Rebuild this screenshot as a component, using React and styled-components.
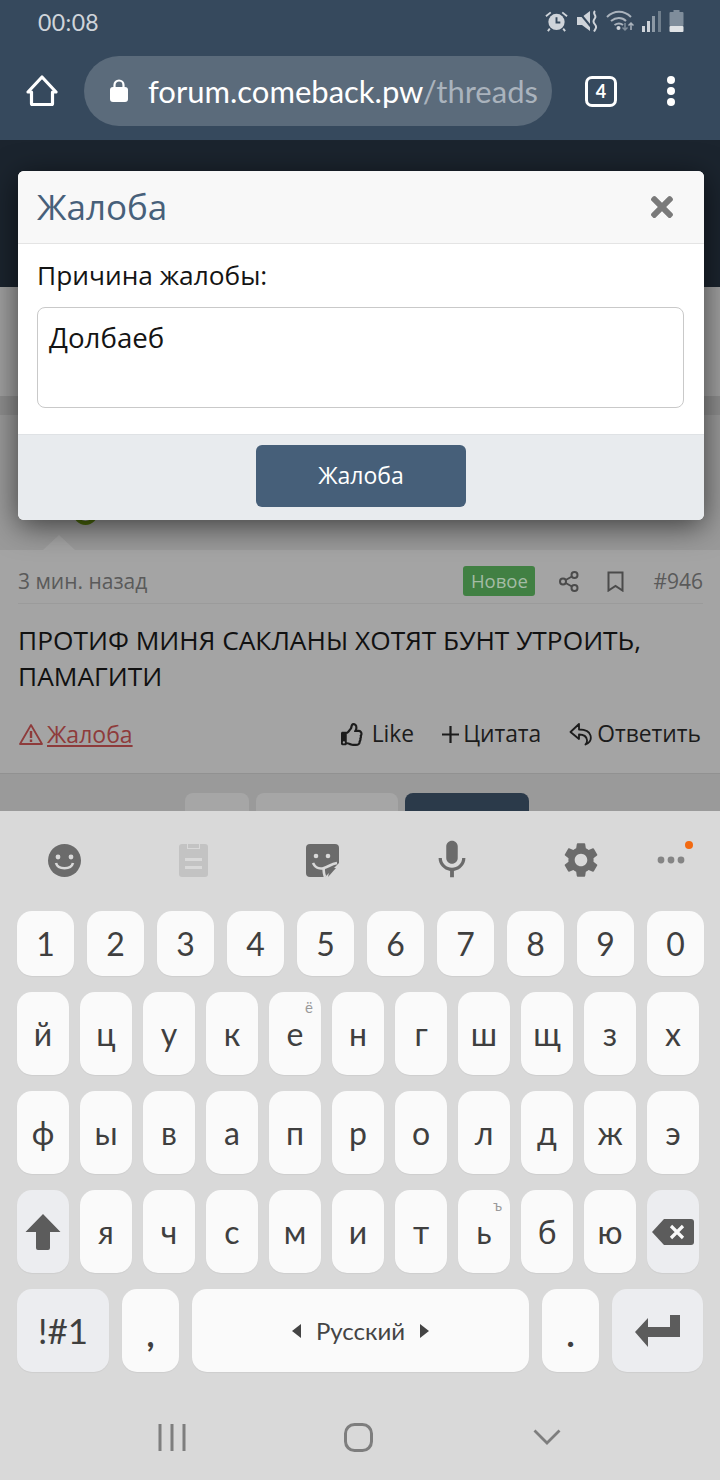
import styled, { createGlobalStyle } from "styled-components";
import { FaRegThumbsUp, FaTimes } from "react-icons/fa";
import { MdMic, MdSettings } from "react-icons/md";

const GlobalStyle = createGlobalStyle`
  html, body { margin: 0; padding: 0; background: #d9d9d9; }
  * { box-sizing: border-box; }
`;

const hand = `"Lato", "Noto Sans", sans-serif`;
const forum = `"Open Sans", "Noto Sans", sans-serif`;

const Phone = styled.div`
  width: 720px;
  height: 1480px;
  display: flex;
  flex-direction: column;
  overflow: hidden;
`;

/* browser chrome */
const Chrome = styled.header`
  height: 140px;
  background: #36495d;
  display: flex;
  flex-direction: column;
`;
const StatusBar = styled.div`
  height: 56px;
  display: flex;
  justify-content: space-between;
  align-items: flex-start;
  padding: 10px 36px 0 38px;
`;
const Clock = styled.span`
  font: 400 23px/24px ${hand};
  color: #cfd4da;
  letter-spacing: 0.4px;
`;
const StatusIcons = styled.div`
  display: flex;
  gap: 8px;
  align-items: center;
`;
const AddressRow = styled.div`
  height: 70px;
  display: flex;
  align-items: center;
  padding-left: 26px;
`;
const Pill = styled.div`
  width: 468px;
  height: 70px;
  margin-left: 26px;
  border-radius: 35px;
  background: #5b6b7b;
  display: flex;
  align-items: center;
  padding: 0 14px 0 26px;
  gap: 20px;
  overflow: hidden;
  svg { flex: none; }
`;
const Url = styled.span`
  font: 400 31px/70px ${hand};
  color: #fff;
  white-space: nowrap;
  span { color: #aab3bd; }
`;
const TabCount = styled.div`
  width: 32px;
  height: 31px;
  margin-left: 33px;
  border: 3.5px solid #fff;
  border-radius: 7px;
  color: #fff;
  font: 700 18px/24px ${hand};
  text-align: center;
`;
const MenuDots = styled.div`
  margin-left: 50px;
  display: flex;
  flex-direction: column;
  gap: 3px;
  i {
    display: block;
    width: 8px;
    height: 8px;
    border-radius: 50%;
    background: #fff;
  }
`;

/* dimmed forum page */
const Page = styled.main`
  position: relative;
  height: 671px;
  overflow: hidden;
  background: #9e9e9e;
  display: flex;
  flex-direction: column;
`;
const Band = styled.div`
  height: ${(p) => p.$h}px;
  background: ${(p) => p.$bg};
  flex: none;
`;
const AvatarBand = styled.div`
  height: 135px;
  flex: none;
  background: #9a9a9a;
  display: flex;
  align-items: flex-end;
  padding: 0 0 25px 73px;
`;
const AvatarRing = styled.div`
  width: 25px;
  height: 25px;
  border-radius: 50%;
  border: 4px solid #4c6a0c;
`;
const Post = styled.article`
  position: relative;
  height: 224px;
  flex: none;
  background: #a4a4a4;
  border-bottom: 1px solid #919191;
  padding: 16px 17px 0 18px;
  &::before {
    content: "";
    position: absolute;
    left: 43px;
    top: -15px;
    border-left: 16px solid transparent;
    border-right: 16px solid transparent;
    border-bottom: 15px solid #a4a4a4;
  }
`;
const PostMeta = styled.div`
  height: 38px;
  display: flex;
  align-items: center;
  border-bottom: 1px solid #9b9b9b;
  padding-bottom: 7px;
`;
const Ago = styled.span`
  font: 400 21px/30px ${forum};
  color: #5a5a5a;
  margin-right: auto;
`;
const NewBadge = styled.span`
  width: 72px;
  height: 30px;
  border-radius: 3px;
  background: #418043;
  color: #a4bca5;
  font: 400 18.5px/30px ${forum};
  text-align: center;
`;
const MetaIcon = styled.span`
  display: flex;
  margin-left: ${(p) => p.$ml}px;
`;
const PostNo = styled.span`
  margin-left: 29px;
  font: 400 21px/30px ${forum};
  color: #5a5a5a;
`;
const PostBody = styled.p`
  margin: 18px 0 0;
  font: 400 26.3px/36px ${forum};
  color: #111;
  height: 72px;
`;
const PostActions = styled.div`
  margin-top: 24px;
  display: flex;
  align-items: center;
  padding: 0 2px 0 1px;
`;
const ReportLink = styled.a`
  display: flex;
  align-items: center;
  margin-left: 4px;
  color: #8e3b3b;
  font: 400 23px/32px ${forum};
  margin-right: auto;
  text-decoration: underline;
`;
const Action = styled.a`
  display: flex;
  align-items: center;
  gap: ${(p) => p.$gap}px;
  margin-left: ${(p) => p.$ml}px;
  color: #1c1c1c;
  font: 400 22.8px/32px ${forum};
`;
const PagerBand = styled.nav`
  flex: none;
  height: 37px;
  background: #9a9a9a;
  display: flex;
  gap: 7px;
  padding: 19px 0 0 185px;
`;
const PagerButton = styled.span`
  width: ${(p) => p.$w}px;
  height: 40px;
  border-radius: 8px 8px 0 0;
  background: ${(p) => (p.$active ? "#2b3a4a" : "#a6a6a6")};
`;

/* report dialog */
const Modal = styled.section`
  position: absolute;
  left: 18px;
  top: 31px;
  width: 686px;
  height: 349px;
  border-radius: 6px;
  overflow: hidden;
  background: #fff;
  box-shadow: 0 6px 30px rgba(0, 0, 0, 0.6);
  display: flex;
  flex-direction: column;
`;
const ModalHead = styled.div`
  height: 73px;
  flex: none;
  background: #f8f8f8;
  border-bottom: 1px solid #e4e4e4;
  display: flex;
  justify-content: space-between;
  align-items: center;
  padding: 0 26px 0 19px;
`;
const ModalTitle = styled.h2`
  margin: 0;
  font: 400 35px/44px ${forum};
  color: #47607a;
`;
const ModalBody = styled.div`
  height: 190px;
  flex: none;
  padding: 13px 20px 0 19px;
`;
const FieldLabel = styled.label`
  display: block;
  font: 400 26.3px/36px ${forum};
  color: #141414;
`;
const TextBox = styled.div`
  margin-top: 14px;
  height: 101px;
  border: 1px solid #c9c9c9;
  border-radius: 8px;
  padding: 10px 11px;
  font: 400 27.7px/38px ${forum};
  color: #141414;
`;
const ModalFoot = styled.div`
  flex: 1;
  background: #e8ebee;
  border-top: 1px solid #dfe2e5;
  display: flex;
  justify-content: center;
  padding-top: 10px;
`;
const SubmitButton = styled.button`
  width: 210px;
  height: 62px;
  border: 0;
  border-radius: 6px;
  padding: 0 0 2px;
  background: #465f79;
  color: #fff;
  font: 400 23px/60px ${forum};
`;

/* keyboard */
const Keyboard = styled.section`
  flex: 1;
  background: #d9d9d9;
  display: flex;
  flex-direction: column;
`;
const Toolbar = styled.div`
  height: 100px;
  padding-bottom: 2px;
  display: grid;
  grid-template-columns: repeat(5, 129px) 52px;
  align-items: center;
  justify-items: center;
`;
const ToolCell = styled.span`
  position: relative;
  display: flex;
`;
const Badge = styled.i`
  position: absolute;
  right: -8px;
  top: -15px;
  width: 8px;
  height: 8px;
  border-radius: 50%;
  background: #f26a12;
`;
const Keys = styled.div`
  display: flex;
  flex-direction: column;
  gap: 16px;
  padding-left: 17px;
`;
const KeyRow = styled.div`
  display: flex;
  gap: ${(p) => p.$gap}px;
`;
const Key = styled.div`
  position: relative;
  width: ${(p) => p.$w}px;
  height: ${(p) => p.$h}px;
  border-radius: 15px;
  background: ${(p) => (p.$fn ? "#ecedf0" : "#fafafa")};
  box-shadow: 0 1px 1px rgba(0, 0, 0, 0.05);
  display: flex;
  align-items: ${(p) => (p.$low ? "flex-end" : "center")};
  justify-content: center;
  gap: 15px;
  padding-bottom: ${(p) => (p.$low ? 11 : 0)}px;
  color: #3f3f3f;
  font: ${(p) => (p.$low ? 900 : 400)} ${(p) => p.$size || 32}px/${(p) => (p.$low ? "52px" : "1")} ${hand};
`;
const KeyHint = styled.span`
  position: absolute;
  top: 6px;
  right: 8px;
  font: 400 15px/18px ${hand};
  color: #9a9a9a;
`;
const SpaceLabel = styled.span`
  font: 400 24px/1 ${hand};
  color: #444;
`;
const NavBar = styled.div`
  flex: 1;
  display: flex;
  align-items: center;
  padding-top: 22px;
`;
const NavCell = styled.span`
  width: ${(p) => p.$w}px;
  display: flex;
  justify-content: center;
  flex: none;
`;

const icon = "#6b6b6b";

function AlarmIcon() {
  return (
    <svg width="23" height="22" viewBox="0 0 24 22">
      <circle cx="12" cy="12" r="8.5" fill="#cfd4da" />
      <path d="M12 7v5.500h4" stroke="#36495d" strokeWidth="2" fill="none" />
      <path d="M1 6l5-4M23 6l-5-4M5 19l-2 2.500M19 19l2 2.500" stroke="#cfd4da" strokeWidth="2" />
    </svg>
  );
}

function MuteIcon() {
  return (
    <svg width="22" height="22" viewBox="0 0 22 22">
      <path d="M1 7h5l8 -6v20l-8-6H1z" fill="#cfd4da" />
      <path d="M2 1l14 17" stroke="#36495d" strokeWidth="2" />
      <path d="M19 1c-3 3 2 4 0 7s-2 4 0 6.500s1 4-1 7" stroke="#cfd4da" strokeWidth="2" fill="none" />
    </svg>
  );
}

function WifiIcon() {
  return (
    <svg width="28" height="22" viewBox="0 0 28 22">
      <path d="M1 7c7-7 17-7 24 0M5 11c5-4 11-4 15 0M8.500 15c3-2 6-2 8.500 0" stroke="#aab3bd" strokeWidth="2" fill="none" />
      <circle cx="12.500" cy="18" r="2" fill="#cfd4da" />
      <path d="M19 13v7m-2.500-2.500l2.500 2.500l2.500-2.500" stroke="#7f8d9b" strokeWidth="1.500" fill="none" />
      <path d="M25 20v-7m-2.500 2.500l2.500-2.500l2.500 2.500" stroke="#aab3bd" strokeWidth="1.500" fill="none" />
    </svg>
  );
}

function SignalIcon() {
  return (
    <svg width="19" height="22" viewBox="0 0 19 22">
      <rect x="0" y="16" width="3" height="6" fill="#cfd4da" />
      <rect x="5" y="11" width="3" height="11" fill="#cfd4da" />
      <rect x="10" y="6" width="3" height="16" fill="#8d99a5" />
      <rect x="16" y="1" width="3" height="21" fill="#6f7e8c" />
    </svg>
  );
}

function BatteryIcon() {
  return (
    <svg width="15" height="22" viewBox="0 0 15 22">
      <rect x="4.500" y="0" width="6" height="3" fill="#7f8d9b" />
      <rect x="0.500" y="2" width="14" height="14" rx="1" fill="#7f8d9b" />
      <rect x="0.500" y="16" width="14" height="6" rx="1" fill="#dfe2e5" />
    </svg>
  );
}

function HomeIcon() {
  return (
    <svg width="32" height="32" viewBox="0 0 32 32">
      <path d="M16 2L30 17h-3.500v11.500a1 1 0 0 1-1 1H6.500a1 1 0 0 1-1-1V17H2z" fill="none" stroke="#fff" strokeWidth="3.200" strokeLinejoin="round" />
    </svg>
  );
}

function LockIcon() {
  return (
    <svg width="18" height="24" viewBox="0 0 18 24">
      <path d="M4.500 10V6a4.500 4.500 0 0 1 9 0v4" fill="none" stroke="#fff" strokeWidth="2.200" />
      <rect x="0" y="8" width="18" height="15" rx="3" fill="#fff" />
    </svg>
  );
}

function ShareIcon() {
  return (
    <svg width="20" height="21" viewBox="0 0 20 21" fill="none" stroke="#4b4b4b" strokeWidth="2">
      <circle cx="15.500" cy="4" r="3" />
      <circle cx="4" cy="10.500" r="3" />
      <circle cx="15.500" cy="17" r="3" />
      <path d="M6.700 9l6.200-3.500M6.700 12l6.200 3.500" />
    </svg>
  );
}

function BookmarkIcon() {
  return (
    <svg width="17" height="21" viewBox="0 0 17 21">
      <path d="M1.500 1.500h14v18l-7-4.500l-7 4.500z" fill="none" stroke="#4b4b4b" strokeWidth="2" />
    </svg>
  );
}

function WarnIcon() {
  return (
    <svg width="24" height="22" viewBox="0 0 24 22">
      <path d="M12 2L23 21H1z" fill="none" stroke="#8e3b3b" strokeWidth="1.800" strokeLinejoin="round" />
      <path d="M12 8v7M12 16.500v2.500" stroke="#8e3b3b" strokeWidth="2.400" />
    </svg>
  );
}

function ReplyIcon() {
  return (
    <svg width="24" height="24" viewBox="0 0 24 24">
      <path d="M10 2L1.500 10L10 17v-4.500c5 0 7.500 1.500 8 5.500c.2 2-.5 3.500-1.500 4.500c4-1.500 6-5 5-9c-1-4-5-6-11.500-6z" fill="none" stroke="#1c1c1c" strokeWidth="1.800" strokeLinejoin="round" />
    </svg>
  );
}

function PlusIcon() {
  return (
    <svg width="17" height="17" viewBox="0 0 17 17">
      <path d="M8.500 0v17M0 8.500h17" stroke="#1c1c1c" strokeWidth="2.200" />
    </svg>
  );
}

function SmileIcon() {
  return (
    <svg width="33" height="33" viewBox="0 0 33 33">
      <circle cx="16.500" cy="16.500" r="16.500" fill={icon} />
      <circle cx="10" cy="13" r="2.400" fill="#d9d9d9" />
      <circle cx="23" cy="13" r="2.400" fill="#d9d9d9" />
      <path d="M8 19c2 7 15 7 17 0" fill="none" stroke="#d9d9d9" strokeWidth="2.600" />
    </svg>
  );
}

function ClipboardIcon() {
  return (
    <svg width="29" height="33" viewBox="0 0 29 33">
      <path d="M3 0h5v5h13V0h5a3 3 0 0 1 3 3v27a3 3 0 0 1-3 3H3a3 3 0 0 1-3-3V3a3 3 0 0 1 3-3z" fill="#c3c3c3" />
      <rect x="9" y="0" width="11" height="4" fill="#c3c3c3" />
      <rect x="6" y="14" width="17" height="3" fill="#d9d9d9" />
      <rect x="6" y="22" width="17" height="3" fill="#d9d9d9" />
    </svg>
  );
}

function StickerIcon() {
  return (
    <svg width="33" height="33" viewBox="0 0 33 33">
      <path d="M4 0h25a4 4 0 0 1 4 4v15L19 33H4a4 4 0 0 1-4-4V4a4 4 0 0 1 4-4z" fill={icon} />
      <circle cx="10" cy="12" r="2.300" fill="#d9d9d9" />
      <circle cx="22" cy="12" r="2.300" fill="#d9d9d9" />
      <path d="M7 19c3 6 8 6 11 5c4-1 7-4 13-5M18 24c-1 3 0 6 1 9" fill="none" stroke="#d9d9d9" strokeWidth="2.600" />
      <path d="M24 24h6L22 33z" fill={icon} />
    </svg>
  );
}

function MoreDots() {
  return (
    <svg width="28" height="8" viewBox="0 0 28 8">
      <circle cx="4" cy="4" r="3.400" fill="#858585" />
      <circle cx="14" cy="4" r="3.400" fill="#858585" />
      <circle cx="24" cy="4" r="3.400" fill="#858585" />
    </svg>
  );
}

function ShiftIcon() {
  return (
    <svg width="36" height="36" viewBox="0 0 36 36">
      <path d="M18 0l17.500 18H25v16a2 2 0 0 1-2 2H13a2 2 0 0 1-2-2V18H.500z" fill="#5c5c5c" />
    </svg>
  );
}

function BackspaceIcon() {
  return (
    <svg width="42" height="26" viewBox="0 0 42 26">
      <path d="M12 0h27a3 3 0 0 1 3 3v20a3 3 0 0 1-3 3H12L0 13z" fill="#5c5c5c" />
      <path d="M19 7l12 12M31 7L19 19" stroke="#fafafa" strokeWidth="3.200" />
    </svg>
  );
}

function EnterIcon() {
  return (
    <svg width="45" height="32" viewBox="0 0 45 32">
      <path d="M35 0h10v22H13v10L0 17l13-14v9h22z" fill="#5c5c5c" />
    </svg>
  );
}

function Caret({ flip }) {
  return (
    <svg width="9" height="14" viewBox="0 0 9 14">
      <path d={flip ? "M0 0l9 7l-9 7z" : "M9 0L0 7l9 7z"} fill="#444" />
    </svg>
  );
}

function RecentsIcon() {
  return (
    <svg width="28" height="27" viewBox="0 0 28 27">
      <path d="M2 0v27M14 0v27M26 0v27" stroke="#7e7e7e" strokeWidth="3" />
    </svg>
  );
}

function HomeNavIcon() {
  return (
    <svg width="29" height="29" viewBox="0 0 29 29">
      <rect x="1.500" y="1.500" width="26" height="26" rx="9" fill="none" stroke="#7e7e7e" strokeWidth="3" />
    </svg>
  );
}

function BackIcon() {
  return (
    <svg width="28" height="16" viewBox="0 0 28 16">
      <path d="M1.500 1.500L14 14L26.500 1.500" fill="none" stroke="#7e7e7e" strokeWidth="2.800" />
    </svg>
  );
}

const numbers = ["1", "2", "3", "4", "5", "6", "7", "8", "9", "0"];
const rowOne = ["й", "ц", "у", "к", "е", "н", "г", "ш", "щ", "з", "х"];
const rowTwo = ["ф", "ы", "в", "а", "п", "р", "о", "л", "д", "ж", "э"];
const rowThree = ["я", "ч", "с", "м", "и", "т", "ь", "б", "ю"];
const hints = { е: "ё", ь: "ъ" };

function LetterKey({ letter }) {
  return (
    <Key $w={52} $h={83}>
      {letter}
      {hints[letter] && <KeyHint>{hints[letter]}</KeyHint>}
    </Key>
  );
}

export default function App() {
  return (
    <Phone>
      <GlobalStyle />
      <Chrome>
        <StatusBar>
          <Clock>00:08</Clock>
          <StatusIcons>
            <AlarmIcon />
            <MuteIcon />
            <WifiIcon />
            <SignalIcon />
            <BatteryIcon />
          </StatusIcons>
        </StatusBar>
        <AddressRow>
          <HomeIcon />
          <Pill>
            <LockIcon />
            <Url>
              forum.comeback.pw<span>/threads</span>
            </Url>
          </Pill>
          <TabCount>4</TabCount>
          <MenuDots>
            <i />
            <i />
            <i />
          </MenuDots>
        </AddressRow>
      </Chrome>

      <Page>
        <Band $h={147} $bg="#1b242e" />
        <Band $h={109} $bg="#a0a0a0" />
        <Band $h={19} $bg="#8e8e8e" />
        <AvatarBand>
          <AvatarRing />
        </AvatarBand>
        <Post>
          <PostMeta>
            <Ago>3 мин. назад</Ago>
            <NewBadge>Новое</NewBadge>
            <MetaIcon $ml={24}>
              <ShareIcon />
            </MetaIcon>
            <MetaIcon $ml={28}>
              <BookmarkIcon />
            </MetaIcon>
            <PostNo>#946</PostNo>
          </PostMeta>
          <PostBody>ПРОТИФ МИНЯ САКЛАНЫ ХОТЯТ БУНТ УТРОИТЬ, ПАМАГИТИ</PostBody>
          <PostActions>
            <WarnIcon />
            <ReportLink>Жалоба</ReportLink>
            <Action $ml={0} $gap={8}>
              <FaRegThumbsUp size={23} color="#1c1c1c" />
              Like
            </Action>
            <Action $ml={28} $gap={4}>
              <PlusIcon />
              Цитата
            </Action>
            <Action $ml={28} $gap={4}>
              <ReplyIcon />
              Ответить
            </Action>
          </PostActions>
        </Post>
        <PagerBand>
          <PagerButton $w={64} />
          <PagerButton $w={142} />
          <PagerButton $w={124} $active />
        </PagerBand>

        <Modal>
          <ModalHead>
            <ModalTitle>Жалоба</ModalTitle>
            <FaTimes size={32} color="#7a7a7a" />
          </ModalHead>
          <ModalBody>
            <FieldLabel>Причина жалобы:</FieldLabel>
            <TextBox>Долбаеб</TextBox>
          </ModalBody>
          <ModalFoot>
            <SubmitButton>Жалоба</SubmitButton>
          </ModalFoot>
        </Modal>
      </Page>

      <Keyboard>
        <Toolbar>
          <SmileIcon />
          <ClipboardIcon />
          <StickerIcon />
          <MdMic size={46} color={icon} />
          <MdSettings size={42} color={icon} />
          <ToolCell>
            <MoreDots />
            <Badge />
          </ToolCell>
        </Toolbar>
        <Keys>
          <KeyRow $gap={13}>
            {numbers.map((n) => (
              <Key key={n} $w={57} $h={65}>
                {n}
              </Key>
            ))}
          </KeyRow>
          <KeyRow $gap={11}>
            {rowOne.map((l) => (
              <LetterKey key={l} letter={l} />
            ))}
          </KeyRow>
          <KeyRow $gap={11}>
            {rowTwo.map((l) => (
              <LetterKey key={l} letter={l} />
            ))}
          </KeyRow>
          <KeyRow $gap={11}>
            <Key $w={52} $h={83} $fn>
              <ShiftIcon />
            </Key>
            {rowThree.map((l) => (
              <LetterKey key={l} letter={l} />
            ))}
            <Key $w={52} $h={83} $fn>
              <BackspaceIcon />
            </Key>
          </KeyRow>
          <KeyRow $gap={13}>
            <Key $w={92} $h={83} $fn $size={35}>
              !#1
            </Key>
            <Key $w={57} $h={83} $low>
              ,
            </Key>
            <Key $w={337} $h={83}>
              <Caret />
              <SpaceLabel>Русский</SpaceLabel>
              <Caret flip />
            </Key>
            <Key $w={57} $h={83} $low>
              .
            </Key>
            <Key $w={91} $h={83} $fn>
              <EnterIcon />
            </Key>
          </KeyRow>
        </Keys>
        <NavBar>
          <NavCell $w={343}>
            <RecentsIcon />
          </NavCell>
          <NavCell $w={30}>
            <HomeNavIcon />
          </NavCell>
          <NavCell $w={347}>
            <BackIcon />
          </NavCell>
        </NavBar>
      </Keyboard>
    </Phone>
  );
}
